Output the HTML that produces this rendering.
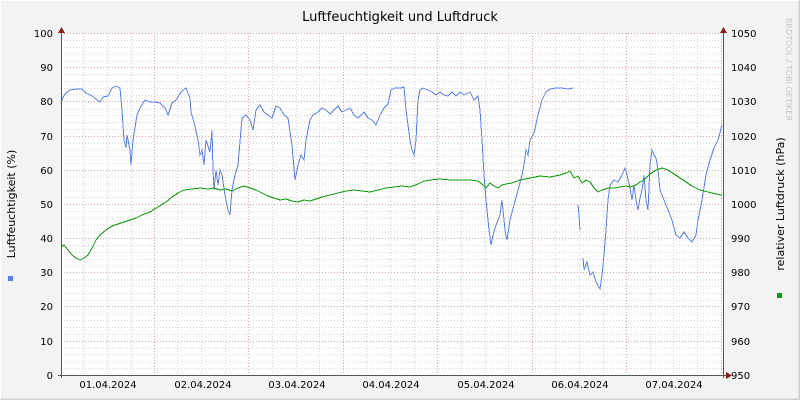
<!DOCTYPE html>
<html><head><meta charset="utf-8"><style>
html,body{margin:0;padding:0;background:#f3f3f3;}
svg{display:block;font-family:"DejaVu Sans","Liberation Sans",sans-serif;}
</style></head><body>
<svg width="800" height="400" xmlns="http://www.w3.org/2000/svg">
<rect x="0" y="0" width="800" height="400" fill="#f3f3f3"/>
<path d="M0.5,399.5V0.5H799.5" stroke="#ffffff" fill="none"/>
<path d="M0.5,399.5H799.5V0.5" stroke="#cfcfcf" fill="none" stroke-width="2"/>
<rect x="61" y="33" width="662" height="342" fill="#ffffff"/>
<g id="grid" stroke-dasharray="1,2" stroke-width="1" shape-rendering="crispEdges">
<g stroke="#d6d6d6">
<path d="M61,40.3H723M61,47.2H723M61,54H723M61,60.9H723M61,74.6H723M61,81.4H723M61,88.3H723M61,95.1H723M61,108.8H723M61,115.6H723M61,122.5H723M61,129.3H723M61,143H723M61,149.8H723M61,156.7H723M61,163.5H723M61,177.2H723M61,184H723M61,190.9H723M61,197.7H723M61,211.4H723M61,218.2H723M61,225.1H723M61,231.9H723M61,245.6H723M61,252.4H723M61,259.3H723M61,266.1H723M61,279.8H723M61,286.6H723M61,293.5H723M61,300.3H723M61,314H723M61,320.8H723M61,327.7H723M61,334.5H723M61,348.2H723M61,355H723M61,361.9H723M61,368.7H723"/>
<path d="M83.5,33V375M107.5,33V375M131.5,33V375M177.5,33V375M201.5,33V375M225.5,33V375M272.5,33V375M296.5,33V375M319.5,33V375M366.5,33V375M390.5,33V375M414.5,33V375M461.5,33V375M485.5,33V375M508.5,33V375M555.5,33V375M579.5,33V375M603.5,33V375M650.5,33V375M673.5,33V375M697.5,33V375"/>
</g>
<g stroke="#e3a3a3">
<path d="M61,33.5H723M61,67.5H723M61,101.5H723M61,136.5H723M61,170.5H723M61,204.5H723M61,238.5H723M61,272.5H723M61,306.5H723M61,341.5H723"/>
<path d="M154.5,33V375M248.5,33V375M343.5,33V375M437.5,33V375M532.5,33V375M626.5,33V375M721.5,33V375"/>
</g>
</g>
<g shape-rendering="crispEdges">
<polyline fill="none" stroke="#5b7fe8" stroke-width="1" points="61,103 63,97 66,93 70,90 76,89 82,89 86,93 92,96 96,99 100,102 103,97 108,96 112,88 116,86 120,88 122,110 124,140 126,148 127,135 130,150 131,165 133,140 137,115 140,108 145,100 150,102 155,102 160,103 165,108 168,115 172,103 176,100 181,92 186,88 190,98 191,112 195,126 198,140 200,155 202,150 204,165 206,140 210,152 212,130 213,170 214,190 216,170 218,185 220,170 222,175 225,195 228,210 230,215 232,190 235,175 238,165 242,118 246,115 250,120 253,130 256,110 260,105 264,112 268,115 272,118 276,106 280,108 284,115 288,118 292,145 295,180 298,165 301,155 304,160 306,140 310,120 313,115 318,112 322,108 326,110 330,114 334,110 338,106 342,112 346,110 350,108 354,115 358,118 364,112 368,118 372,120 376,125 380,115 384,108 388,104 391,90 395,88 401,88 404,87 406,110 408,125 410,140 412,150 414,155 416,140 418,100 420,90 423,88 428,90 432,92 436,95 440,92 444,95 448,96 452,92 456,96 460,92 464,95 470,92 474,100 478,96 480,110 482,140 484,175 486,200 489,230 491,245 493,235 496,225 500,215 502,200 505,230 507,240 510,220 514,205 518,190 522,175 524,165 526,150 528,155 530,140 534,133 538,115 542,100 546,92 550,89 556,88 562,88 568,89 573,88"/>
<polyline fill="none" stroke="#5b7fe8" stroke-width="1" points="578,205 579,215 580,230"/>
<polyline fill="none" stroke="#5b7fe8" stroke-width="1" points="583,258 584,270 587,262 590,275 593,272 596,282 600,289 602,275 604,255 606,230 608,200 610,185 614,180 618,182 622,175 625,168 627,175 630,188 632,200 634,185 636,200 638,210 640,198 642,190 644,175 646,200 648,210 650,165 652,150 654,155 656,158 658,170 660,190 664,200 668,210 672,220 676,235 680,238 684,232 688,238 692,242 696,235 698,220 702,200 706,175 710,160 714,148 718,140 722,125"/>
<polyline fill="none" stroke="#0a9a0a" stroke-width="1" points="61,247 64,245 68,250 72,255 76,258 80,260 84,258 88,255 92,248 96,240 100,235 106,230 112,226 118,224 124,222 130,220 136,218 142,215 150,212 158,207 166,202 172,197 178,193 184,190 192,189 200,188 208,189 214,188 220,190 226,189 232,191 238,188 244,186 250,188 256,190 262,193 268,196 274,198 280,200 286,199 292,201 298,202 304,200 310,201 316,199 322,197 330,195 338,193 346,191 354,190 362,191 370,192 378,190 386,188 394,187 402,186 410,187 418,184 424,181 430,180 440,179 450,180 460,180 470,180 478,181 482,184 486,188 490,183 494,186 498,188 502,185 506,184 512,183 520,180 530,178 540,176 550,177 560,175 566,173 570,171 574,178 578,176 582,183 586,180 590,182 594,188 598,192 602,190 608,188 614,188 620,187 626,186 630,187 636,185 640,182 644,180 650,174 656,170 662,168 668,170 674,174 680,178 686,182 692,186 700,190 708,192 716,194 722,195"/>
</g>
<g stroke="#555" stroke-width="1" shape-rendering="crispEdges">
<path d="M61.5,30V378M723.5,30V378M58,375.5H726"/>
</g>
<polygon points="58,33 65,33 61.5,27" fill="#8b1a1a"/>
<polygon points="720,33 727,33 723.5,27" fill="#8b1a1a"/>
<polygon points="726,372 726,379 732,375.5" fill="#8b1a1a"/>
<g font-size="10" fill="#000" text-anchor="end">
<text x="53" y="37">100</text><text x="53" y="71">90</text><text x="53" y="105">80</text><text x="53" y="140">70</text><text x="53" y="174">60</text><text x="53" y="208">50</text><text x="53" y="242">40</text><text x="53" y="276">30</text><text x="53" y="310">20</text><text x="53" y="345">10</text><text x="53" y="379">0</text>
</g>
<g font-size="10" fill="#000" text-anchor="start">
<text x="731" y="37">1050</text><text x="731" y="71">1040</text><text x="731" y="105">1030</text><text x="731" y="140">1020</text><text x="731" y="174">1010</text><text x="731" y="208">1000</text><text x="731" y="242">990</text><text x="731" y="276">980</text><text x="731" y="310">970</text><text x="731" y="345">960</text><text x="731" y="379">950</text>
</g>
<g font-size="10" fill="#000" text-anchor="middle">
<text x="108" y="388">01.04.2024</text><text x="203" y="388">02.04.2024</text><text x="297" y="388">03.04.2024</text><text x="391" y="388">04.04.2024</text><text x="486" y="388">05.04.2024</text><text x="580" y="388">06.04.2024</text><text x="674" y="388">07.04.2024</text>
</g>
<text x="400" y="21" font-size="13" text-anchor="middle" fill="#000">Luftfeuchtigkeit und Luftdruck</text>
<text transform="translate(15,204) rotate(-90)" font-size="11" text-anchor="middle" fill="#000">Luftfeuchtigkeit (%)</text>
<text transform="translate(784,204) rotate(-90)" font-size="11" text-anchor="middle" fill="#000">relativer Luftdruck (hPa)</text>
<text transform="translate(786,18) rotate(90)" font-size="8" fill="#c8c8c8">RRDTOOL / TOBI OETIKER</text>
<rect x="8" y="276" width="5" height="5" fill="#5b7fe8"/>
<rect x="777" y="293" width="5" height="5" fill="#0a9a0a"/>
</svg>
</body></html>
